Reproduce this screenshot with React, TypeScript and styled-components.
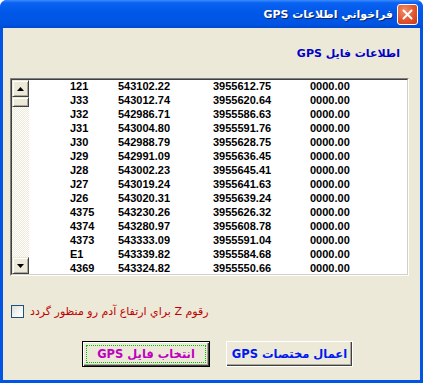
import React from "react";
import styled, { createGlobalStyle } from "styled-components";

const GlobalStyle = createGlobalStyle`
  body {
    margin: 0;
    background: #ffffff;
    font-family: "Liberation Sans", "DejaVu Sans", sans-serif;
  }
`;

const Window = styled.div`
  width: 423px;
  height: 383px;
  display: flex;
  flex-direction: column;
  background: #0055e5;
  border-radius: 7px 7px 0 0;
  overflow: hidden;
  box-sizing: border-box;
`;

const TitleBar = styled.div`
  height: 28px;
  flex: none;
  display: flex;
  flex-direction: row-reverse;
  align-items: center;
  padding: 0 5px 0 6px;
  gap: 4px;
  background: linear-gradient(
    to bottom,
    #3a8cff 0%,
    #0a62f2 10%,
    #0057e8 45%,
    #0054e3 85%,
    #0048d0 100%
  );
`;

const Title = styled.span`
  direction: rtl;
  white-space: nowrap;
  color: #ffffff;
  font-family: "DejaVu Sans", sans-serif;
  font-weight: 700;
  font-size: 11px;
  text-shadow: 1px 1px 0 #0a246a;
`;

const CloseButton = styled.div`
  width: 19px;
  height: 19px;
  border: 1px solid #ffffff;
  border-radius: 3px;
  background: radial-gradient(circle at 35% 30%, #f0906a 0%, #e2542c 55%, #c43a18 100%);
  display: flex;
  align-items: center;
  justify-content: center;
`;

const Client = styled.div`
  flex: 1;
  margin: 0 3px 3px 3px;
  background: #ece9d8;
  display: flex;
  flex-direction: column;
  padding: 19px 0 0 7px;
  box-sizing: border-box;
`;

const SectionLabel = styled.div`
  direction: rtl;
  white-space: nowrap;
  align-self: flex-end;
  margin-right: 20px;
  height: 20px;
  color: #0000c8;
  font-family: "DejaVu Sans", sans-serif;
  font-weight: 700;
  font-size: 11px;
`;

const ListBox = styled.div`
  margin-top: 11px;
  width: 399px;
  height: 198px;
  box-sizing: border-box;
  border-top: 1px solid #808080;
  border-left: 1px solid #808080;
  border-right: 1px solid #ffffff;
  border-bottom: 1px solid #ffffff;
  display: flex;
`;

const ListInner = styled.div`
  flex: 1;
  display: flex;
  border-top: 1px solid #404040;
  border-left: 1px solid #404040;
  border-right: 1px solid #d4d0c8;
  border-bottom: 1px solid #d4d0c8;
  background: #ffffff;
  overflow: hidden;
`;

const ScrollBar = styled.div`
  width: 17px;
  flex: none;
  display: flex;
  flex-direction: column;
  background-color: #ffffff;
  background-image: repeating-conic-gradient(#ece9d8 0% 25%, #ffffff 0% 50%);
  background-size: 2px 2px;
`;

const ScrollButton = styled.div<{ $h: number }>`
  height: ${(p) => p.$h}px;
  flex: none;
  box-sizing: border-box;
  background: #ece9d8;
  border-top: 1px solid #ece9d8;
  border-left: 1px solid #ece9d8;
  border-right: 1px solid #404040;
  border-bottom: 1px solid #404040;
  box-shadow: inset 1px 1px 0 #ffffff, inset -1px -1px 0 #aca899;
  display: flex;
  align-items: center;
  justify-content: center;
`;

const Spacer = styled.div`
  flex: 1;
`;

const Rows = styled.div`
  flex: 1;
  padding-left: 41px;
`;

const Row = styled.div`
  display: grid;
  grid-template-columns: 48px 95px 97px auto;
  height: 14px;
  line-height: 13px;
  font-size: 11px;
  font-weight: 700;
  color: #000000;
  font-family: "Liberation Sans", sans-serif;
`;

const CheckRow = styled.label`
  display: flex;
  align-items: center;
  gap: 6px;
  margin: 29px 0 0 1px;
`;

const CheckBox = styled.span`
  width: 13px;
  height: 13px;
  box-sizing: border-box;
  border: 1px solid #1c5180;
  background: linear-gradient(135deg, #dcdcd7 0%, #f6f6f4 60%, #ffffff 100%);
`;

const CheckText = styled.span`
  direction: rtl;
  white-space: nowrap;
  color: #c00000;
  font-family: "DejaVu Sans", sans-serif;
  font-size: 11px;
`;

const ButtonRow = styled.div`
  display: flex;
  gap: 16px;
  margin: 23px 0 0 72px;
`;

const Button = styled.div<{ $default?: boolean }>`
  width: ${(p) => (p.$default ? 128 : 127)}px;
  height: 26px;
  box-sizing: border-box;
  background: #ece9d8;
  border: 1px solid ${(p) => (p.$default ? "#000000" : "#ffffff")};
  box-shadow: ${(p) =>
    p.$default
      ? "inset 1px 1px 0 #ffffff, inset -1px -1px 0 #404040, inset -2px -2px 0 #aca899"
      : "inset -1px -1px 0 #404040, inset -2px -2px 0 #aca899"};
  display: flex;
  align-items: center;
  justify-content: center;
  padding: 3px;
`;

const ButtonFace = styled.div<{ $color: string; $focus?: boolean }>`
  width: 100%;
  height: 100%;
  box-sizing: border-box;
  display: flex;
  align-items: center;
  justify-content: center;
  direction: rtl;
  white-space: nowrap;
  border: 1px dotted ${(p) => (p.$focus ? "#00c000" : "transparent")};
  color: ${(p) => p.$color};
  font-family: "DejaVu Sans", sans-serif;
  font-weight: 700;
  font-size: 11.5px;
`;

const rows = [
  ["121", "543102.22", "3955612.75"],
  ["J33", "543012.74", "3955620.64"],
  ["J32", "542986.71", "3955586.63"],
  ["J31", "543004.80", "3955591.76"],
  ["J30", "542988.79", "3955628.75"],
  ["J29", "542991.09", "3955636.45"],
  ["J28", "543002.23", "3955645.41"],
  ["J27", "543019.24", "3955641.63"],
  ["J26", "543020.31", "3955639.24"],
  ["4375", "543230.26", "3955626.32"],
  ["4374", "543280.97", "3955608.78"],
  ["4373", "543333.09", "3955591.04"],
  ["E1", "543339.82", "3955584.68"],
  ["4369", "543324.82", "3955550.66"],
];

const Arrow = ({ up }: { up?: boolean }) => (
  <svg width="7" height="4" viewBox="0 0 7 4">
    <path d={up ? "M3.5 0 L7 4 L0 4 Z" : "M0 0 L7 0 L3.5 4 Z"} fill="#000" />
  </svg>
);

const App: React.FC = () => {
  return (
    <>
      <GlobalStyle />
      <Window>
        <TitleBar>
          <CloseButton>
            <svg width="11" height="11" viewBox="0 0 11 11">
              <path d="M1.5 1.5 L9.5 9.5 M9.5 1.5 L1.5 9.5" stroke="#fff" strokeWidth="2" strokeLinecap="round" />
            </svg>
          </CloseButton>
          <Title>فراخواني اطلاعات GPS</Title>
        </TitleBar>
        <Client>
          <SectionLabel>اطلاعات فايل GPS</SectionLabel>
          <ListBox>
            <ListInner>
              <ScrollBar>
                <ScrollButton $h={17}>
                  <Arrow up />
                </ScrollButton>
                <ScrollButton $h={10} />
                <Spacer />
                <ScrollButton $h={17}>
                  <Arrow />
                </ScrollButton>
              </ScrollBar>
              <Rows>
                {rows.map((r) => (
                  <Row key={r[0]}>
                    <span>{r[0]}</span>
                    <span>{r[1]}</span>
                    <span>{r[2]}</span>
                    <span>0000.00</span>
                  </Row>
                ))}
              </Rows>
            </ListInner>
          </ListBox>
          <CheckRow>
            <CheckBox />
            <CheckText>رقوم Z براي ارتفاع آدم رو منظور گردد</CheckText>
          </CheckRow>
          <ButtonRow>
            <Button $default>
              <ButtonFace $color="#c000c0" $focus>
                انتخاب فايل GPS
              </ButtonFace>
            </Button>
            <Button>
              <ButtonFace $color="#0018f0">اعمال مختصات GPS</ButtonFace>
            </Button>
          </ButtonRow>
        </Client>
      </Window>
    </>
  );
};

export default App;
